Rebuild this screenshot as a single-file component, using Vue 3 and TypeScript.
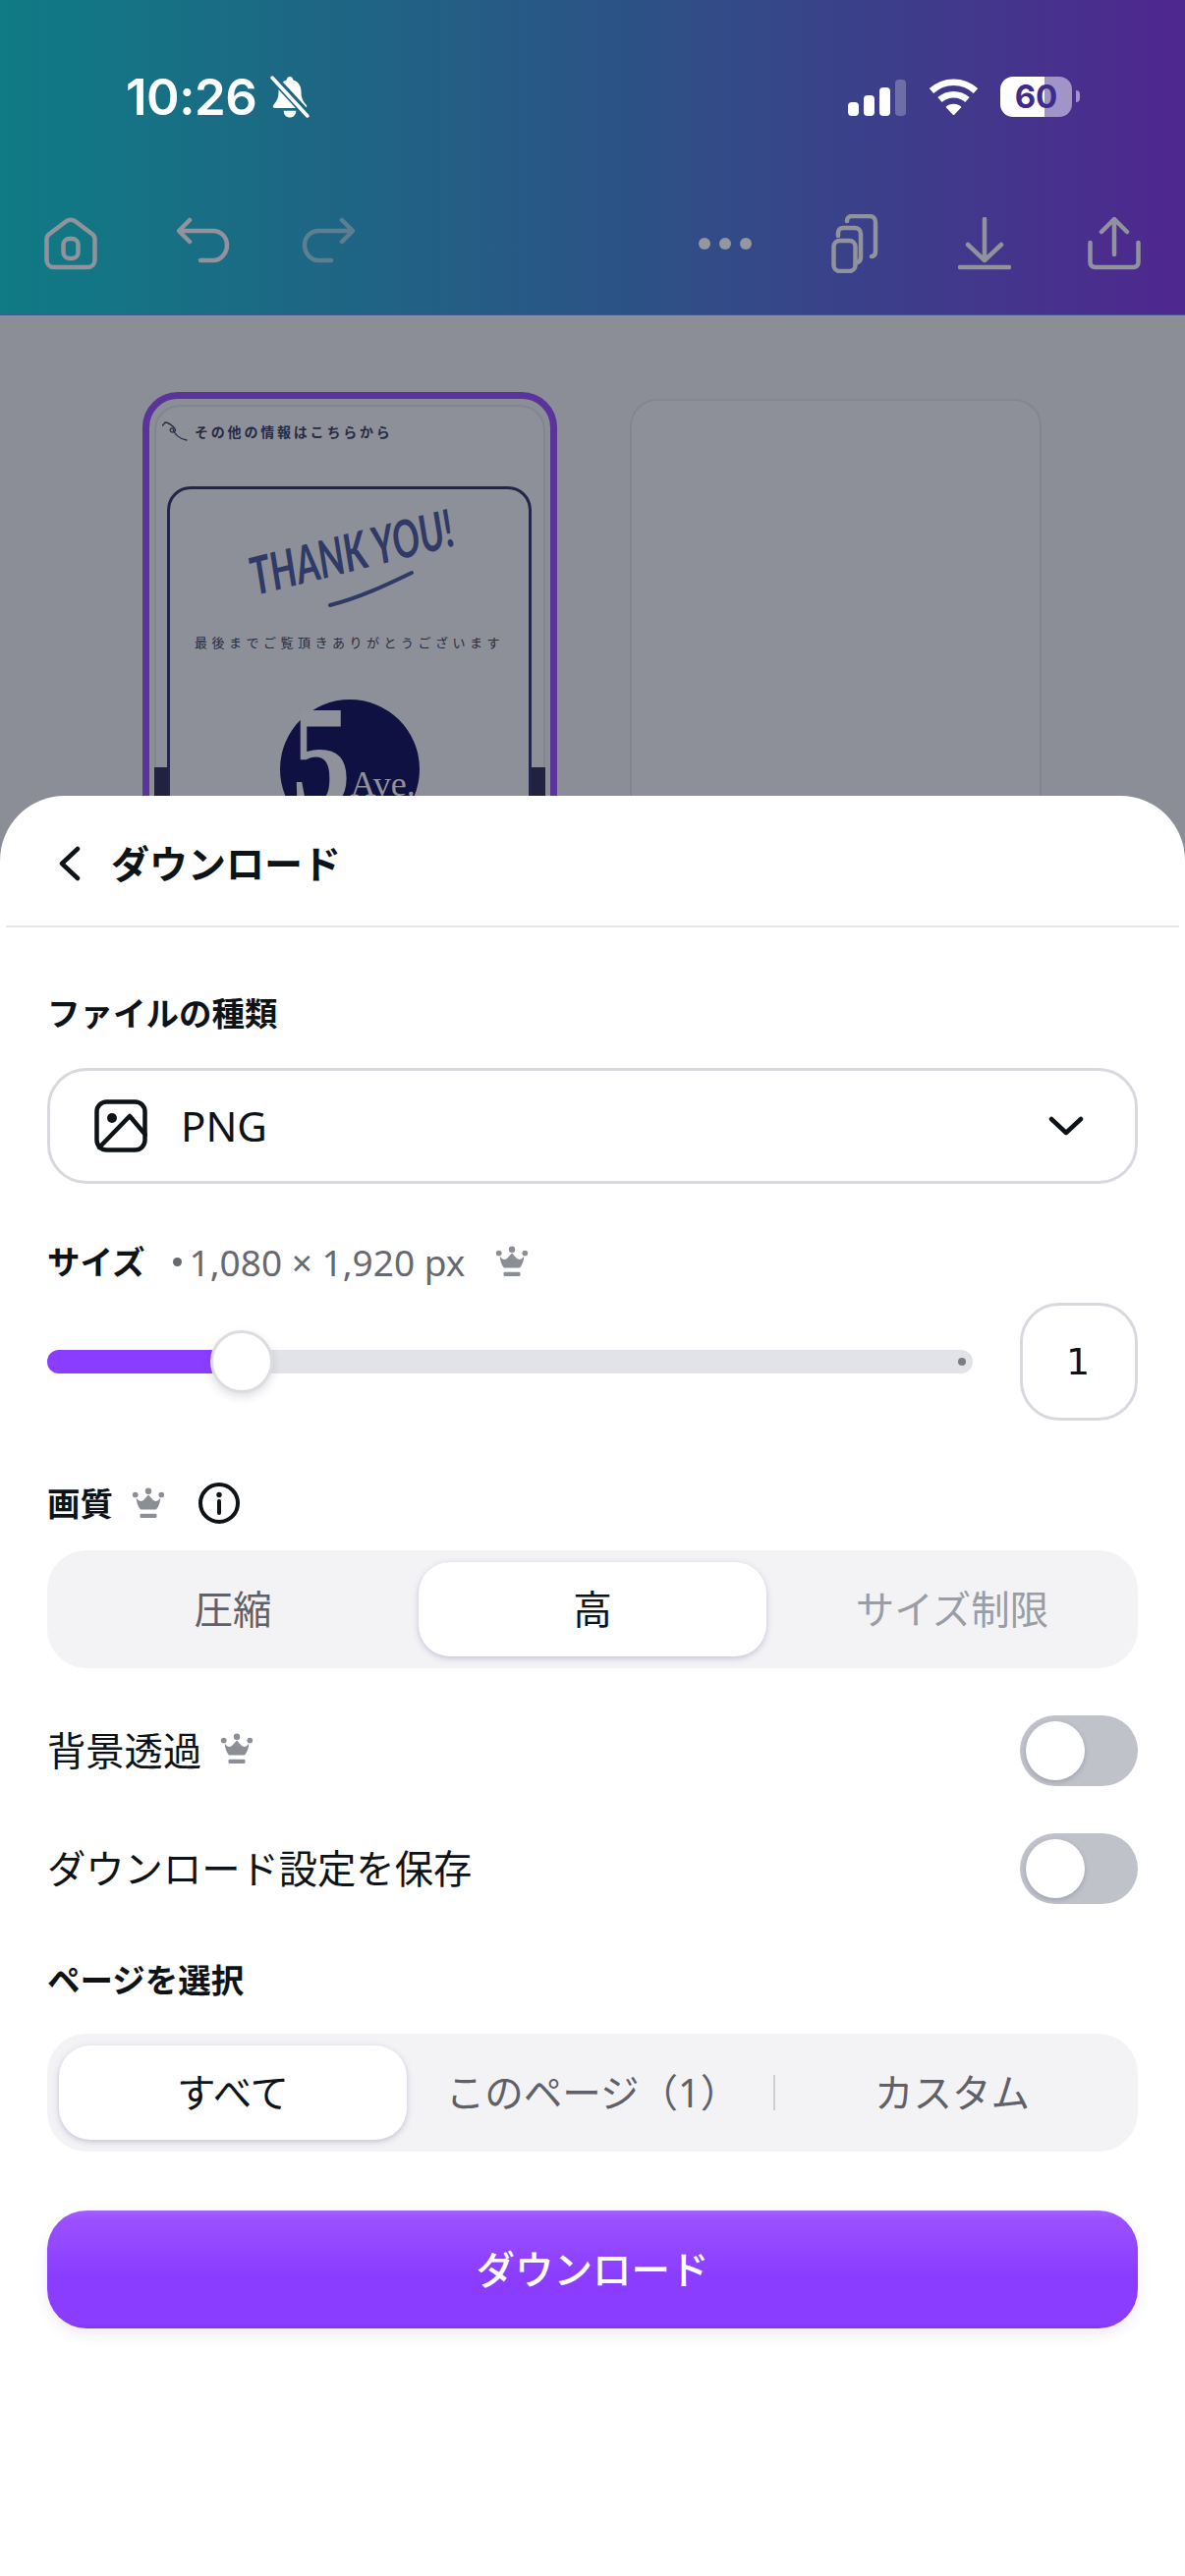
<script setup lang="ts">
interface Tab {
  label: string
  tone: 'on' | 'mid' | 'dim'
  sep?: boolean
}

// 画質
const qualityTabs: Tab[] = [
  { label: '圧縮', tone: 'mid' },
  { label: '高', tone: 'on' },
  { label: 'サイズ制限', tone: 'dim' }
]

// ページを選択
const pageTabs: Tab[] = [
  { label: 'すべて', tone: 'on' },
  { label: 'このページ（1）', tone: 'mid', sep: true },
  { label: 'カスタム', tone: 'mid' }
]

const signalBars = [14, 21, 29]
const sliderPercent = 21
</script>

<template>
  <div class="screen">
    <header class="top">
      <div class="status">
        <span class="time">10:26</span>
        <svg class="bell" width="42" height="44" viewBox="0 0 40 42">
          <path fill="#fff" d="M20 2c2 0 3 1.500 3.200 3.200C29 6.800 31 11.500 31 17c0 6 2 9 5 12.500 1 1.300.3 3-1.500 3H5.500c-1.800 0-2.500-1.700-1.500-3C7 26 9 23 9 17c0-5.500 2-10.200 7.800-11.800C17 3.500 18 2 20 2z" />
          <path fill="#fff" d="M14 35h12c0 4-2.500 6.500-6 6.500S14 39 14 35z" />
          <path stroke="#1c6585" stroke-width="8" d="M3 2l35 38" />
          <path stroke="#fff" stroke-width="3.500" stroke-linecap="round" d="M3 3l34 37" />
        </svg>
        <div class="status-right">
          <div class="signal">
            <i v-for="h in signalBars" :key="h" :style="{ height: h + 'px' }"></i>
            <i class="off"></i>
          </div>
          <svg class="wifi" width="51" height="38" viewBox="0 0 51 38" fill="none" stroke="#fff" stroke-width="6.500">
            <path d="M3 13.500A33 33 0 0 1 48 13.500" />
            <path d="M11.500 22.500A21 21 0 0 1 39.500 22.500" />
            <path fill="#fff" stroke="none" d="M17.500 30A11.500 11.500 0 0 1 33.500 30L25.500 38.500Z" />
          </svg>
          <div class="battery"><span>60</span></div>
          <i class="nub"></i>
        </div>
      </div>
      <nav class="toolbar">
        <svg width="54" height="54" viewBox="0 0 54 54" fill="none" stroke="#90939c" stroke-width="4.500" stroke-linecap="round" stroke-linejoin="round">
          <path d="M2.500 22.500c0-2 .8-3.700 2.300-5L22 4.500c3-2.300 7-2.300 10 0l17.200 13c1.500 1.300 2.300 3 2.300 5v21c0 4.500-3 7.500-7.500 7.500H10c-4.500 0-7.500-3-7.500-7.500z" />
          <rect x="19.500" y="22" width="15" height="20" rx="6" />
        </svg>
        <svg class="undo" width="54" height="54" viewBox="0 0 54 54" fill="none" stroke="#90939c" stroke-width="4.500" stroke-linecap="round" stroke-linejoin="round">
          <path d="M13 3 2 14l11 11M3 14h34c8 0 14 6.500 14 14.500S45 44 37 44H24" />
        </svg>
        <svg class="redo" width="54" height="54" viewBox="0 0 54 54" fill="none" stroke="#90939c" stroke-width="4.500" stroke-linecap="round" stroke-linejoin="round">
          <path d="M41 3l11 11-11 11M51 14H17C9 14 3 20.500 3 28.500S9 44 17 44h13" />
        </svg>
        <svg class="dots" width="54" height="54" viewBox="0 0 54 54" fill="#9496a0">
          <circle cx="6" cy="27" r="6" />
          <circle cx="27" cy="27" r="6" />
          <circle cx="48" cy="27" r="6" />
        </svg>
        <svg width="54" height="60" viewBox="0 0 54 60" fill="none" stroke="#90939c" stroke-width="4.500" stroke-linecap="round" stroke-linejoin="round">
          <rect x="5.500" y="27" width="22" height="31" rx="6" />
          <path d="M10 22v-3c0-3 2-5 5-5h12c3 0 6 2 6 6v24c0 2-1 4-3 5" />
          <path d="M19 7c0-3 2-5 5-5h18c3 0 6 2 6 6v30c0 3-1 5-4 5" />
        </svg>
        <svg width="54" height="54" viewBox="0 0 54 54" fill="none" stroke="#90939c" stroke-width="4.500" stroke-linecap="round" stroke-linejoin="round">
          <path d="M27 2v42M10 28l17 16 17-16M2 51h50" />
        </svg>
        <svg width="54" height="54" viewBox="0 0 54 54" fill="none" stroke="#90939c" stroke-width="4.500" stroke-linecap="round" stroke-linejoin="round">
          <path d="M27 38V2M14 15 27 2l13 13M2.500 26v20c0 3 2 5 5 5h39c3 0 5-2 5-5V26" />
        </svg>
      </nav>
    </header>

    <section class="canvas">
      <div class="page selected">
        <div class="design">
          <div class="more">
            <svg width="26" height="20" viewBox="0 0 26 20" fill="none" stroke="#2a2c45" stroke-width="1.300" stroke-linecap="round" stroke-linejoin="round">
              <path d="M0.500 4 3 1C6 1 9 3 12 6c3 3 1 5-2 5C7 10 8 6 11 7c1 6 7 11 14 12" />
            </svg>
            <span>その他の情報はこちらから</span>
          </div>
          <div class="frame">
            <div class="thanks">
              <span>THANK YOU!</span>
              <svg width="100" height="44" viewBox="0 0 100 44" fill="none" stroke="#2f3a66" stroke-width="4" stroke-linecap="round">
                <path d="M3 41C35 33 65 18 86 8" />
              </svg>
            </div>
            <p class="caption">最後までご覧頂きありがとうございます</p>
            <div class="logo">
              <span class="five">5</span>
              <span class="ave">Ave.</span>
            </div>
          </div>
          <i class="band left"></i>
          <i class="band right"></i>
        </div>
      </div>
      <div class="page blank"></div>
    </section>

    <section class="sheet">
      <div class="sheet-head">
        <svg class="back" width="24" height="36" viewBox="0 0 24 36" fill="none" stroke="#0e1318" stroke-width="4.500" stroke-linecap="round" stroke-linejoin="round">
          <path d="M20 3 4 18l16 15" />
        </svg>
        <h1>ダウンロード</h1>
      </div>

      <div class="body">
        <h2 class="label first">ファイルの種類</h2>
        <div class="select">
          <svg width="54" height="54" viewBox="0 0 54 54" fill="none" stroke="#0e1318" stroke-width="4.500" stroke-linecap="round" stroke-linejoin="round">
            <rect x="2.500" y="2.500" width="49" height="49" rx="10" />
            <circle cx="18" cy="19" r="5" fill="#0e1318" stroke="none" />
            <path d="M5 49 36 17l16 19" />
          </svg>
          <span class="png">PNG</span>
          <svg class="chev" width="36" height="20" viewBox="0 0 36 20" fill="none" stroke="#0e1318" stroke-width="4.500" stroke-linecap="round" stroke-linejoin="round">
            <path d="M3 3l15 14L33 3" />
          </svg>
        </div>

        <div class="size-row">
          <h2 class="label">サイズ</h2>
          <span class="dims"><i></i>1,080 × 1,920 px</span>
          <svg class="crown" width="34" height="32" viewBox="0 0 32 30" fill="#8c8e96">
            <circle cx="3.500" cy="7" r="2.700" /><circle cx="16" cy="3.500" r="3" /><circle cx="28.500" cy="7" r="2.700" />
            <path d="M4.500 10c0 5 3 11 4.500 11h14c1.500 0 4.500-6 4.500-11-2 3-5 4-7 2L16 7l-4.500 5c-2 2-5 1-7-2z" />
            <rect x="8" y="25" width="16" height="4" rx="1" />
          </svg>
        </div>

        <div class="slider-row">
          <div class="track">
            <div class="fill" :style="{ width: sliderPercent + '%' }"></div>
            <i class="end"></i>
            <i class="thumb"></i>
          </div>
          <div class="num">1</div>
        </div>

        <div class="quality-row">
          <h2 class="label">画質</h2>
          <svg class="crown" width="34" height="32" viewBox="0 0 32 30" fill="#8c8e96">
            <circle cx="3.500" cy="7" r="2.700" /><circle cx="16" cy="3.500" r="3" /><circle cx="28.500" cy="7" r="2.700" />
            <path d="M4.500 10c0 5 3 11 4.500 11h14c1.500 0 4.500-6 4.500-11-2 3-5 4-7 2L16 7l-4.500 5c-2 2-5 1-7-2z" />
            <rect x="8" y="25" width="16" height="4" rx="1" />
          </svg>
          <svg class="info" width="42" height="42" viewBox="0 0 42 42" fill="none" stroke="#0e1318" stroke-width="4">
            <circle cx="21" cy="21" r="19" />
            <circle cx="21" cy="12.500" r="2.700" fill="#0e1318" stroke="none" />
            <path d="M21 19v12" stroke-linecap="round" />
          </svg>
        </div>
        <div class="seg quality">
          <div v-for="t in qualityTabs" :key="t.label" class="tab" :class="t.tone">{{ t.label }}</div>
        </div>

        <div class="switch-row first-switch">
          <div class="switch-label">
            <span>背景透過</span>
            <svg class="crown" width="34" height="32" viewBox="0 0 32 30" fill="#8c8e96">
              <circle cx="3.500" cy="7" r="2.700" /><circle cx="16" cy="3.500" r="3" /><circle cx="28.500" cy="7" r="2.700" />
              <path d="M4.500 10c0 5 3 11 4.500 11h14c1.500 0 4.500-6 4.500-11-2 3-5 4-7 2L16 7l-4.500 5c-2 2-5 1-7-2z" />
              <rect x="8" y="25" width="16" height="4" rx="1" />
            </svg>
          </div>
          <div class="toggle"><i></i></div>
        </div>
        <div class="switch-row">
          <div class="switch-label"><span>ダウンロード設定を保存</span></div>
          <div class="toggle"><i></i></div>
        </div>

        <h2 class="label pages">ページを選択</h2>
        <div class="seg">
          <div v-for="t in pageTabs" :key="t.label" class="tab" :class="[t.tone, { sep: t.sep }]">{{ t.label }}</div>
        </div>

        <button class="download">ダウンロード</button>
      </div>
    </section>
  </div>
</template>

<style scoped>
.screen {
  width: 1206px;
  height: 2622px;
  overflow: hidden;
  background: #fff;
  font-family: "Noto Sans", "Noto Sans CJK JP", sans-serif;
  color: #0e1318;
}

/* ヘッダー */
.top {
  height: 321px;
  box-sizing: border-box;
  padding-top: 76px;
  background: linear-gradient(90deg, #0f7b84 0%, #2a5585 50%, #4f278f 100%);
  border-bottom: 1px solid #46558d;
}
.status {
  display: flex;
  align-items: center;
  height: 44px;
  padding-left: 128px;
  color: #fff;
}
.time {
  font-family: Inter, sans-serif;
  font-size: 51px;
  font-weight: 600;
  letter-spacing: -0.5px;
}
.bell {
  margin-left: 13px;
}
.status-right {
  margin-left: auto;
  margin-right: 107px;
  display: flex;
  align-items: center;
}
.signal {
  display: flex;
  align-items: flex-end;
  gap: 5px;
  height: 37px;
  margin-top: 2px;
}
.signal i {
  width: 11px;
  background: #fff;
  border-radius: 4px;
}
.signal i.off {
  height: 37px;
  background: rgba(255, 255, 255, 0.25);
}
.wifi {
  margin-left: 23px;
}
.battery {
  width: 73px;
  height: 41px;
  margin-left: 22px;
  border-radius: 13px;
  background: linear-gradient(90deg, #fff 0 62%, #a094c8 62% 100%);
  display: flex;
  align-items: center;
  justify-content: center;
  font-family: Inter, sans-serif;
  font-size: 33px;
  font-weight: 700;
  color: #402b8c;
}
.nub {
  width: 4px;
  height: 12px;
  margin-left: 4px;
  background: #a094c8;
  border-radius: 0 4px 4px 0;
}
.toolbar {
  display: flex;
  align-items: center;
  height: 60px;
  margin-top: 98px;
  padding-left: 45px;
}
.undo {
  margin-left: 81px;
}
.redo {
  margin-left: 73px;
  opacity: 0.55;
}
.dots {
  margin-left: auto;
}
.toolbar svg + svg:not(.undo):not(.redo):not(.dots) {
  margin-left: 78px;
}
.toolbar svg:last-child {
  margin-right: 45px;
}

/* キャンバス */
.canvas {
  display: flex;
  align-items: flex-start;
  gap: 74px;
  height: 559px;
  box-sizing: border-box;
  padding: 78px 0 0 145px;
  background: #8b8e96;
  overflow: hidden;
}
.page {
  box-sizing: border-box;
  height: 600px;
}
.selected {
  width: 422px;
  padding: 6px 5px;
  border: 7px solid #5b349b;
  border-radius: 36px;
}
.blank {
  width: 419px;
  margin-top: 7px;
  background: #8d9098;
  border: 2px solid #83868f;
  border-radius: 28px;
}
.design {
  position: relative;
  box-sizing: border-box;
  height: 560px;
  padding: 10px 12px 0 11px;
  background: #8d9098;
  border: 2px solid #82858f;
  border-radius: 26px;
}
.more {
  display: flex;
  align-items: center;
  gap: 7px;
  height: 30px;
  margin-left: -5px;
  color: #272a44;
  font-size: 14px;
  font-weight: 700;
  letter-spacing: 2.800px;
  white-space: nowrap;
}
.frame {
  box-sizing: border-box;
  height: 500px;
  margin-top: 41px;
  border: 3px solid #23254a;
  border-radius: 24px;
}
.thanks {
  position: relative;
  height: 90px;
  margin-top: 31px;
}
.thanks span {
  position: absolute;
  left: 82px;
  top: 30px;
  font-family: Lato, sans-serif;
  font-size: 46px;
  font-weight: 700;
  font-style: italic;
  color: #2f3a66;
  white-space: nowrap;
  transform: rotate(-14deg) scale(0.8, 1.15);
  transform-origin: left center;
}
.thanks svg {
  position: absolute;
  left: 160px;
  top: 46px;
}
.caption {
  margin: 23px 0 0;
  height: 24px;
  line-height: 24px;
  text-align: center;
  font-size: 13px;
  letter-spacing: 4.500px;
  color: #2a2c45;
  white-space: nowrap;
}
.logo {
  position: relative;
  width: 142px;
  height: 142px;
  margin: 46px auto 0;
  border-radius: 50%;
  background: #0f1142;
  color: #8f929b;
  font-family: "Liberation Serif", serif;
}
.five {
  position: absolute;
  left: 12px;
  top: -16px;
  font-size: 150px;
  font-weight: 700;
  line-height: 1;
  transform: scaleX(0.8);
  transform-origin: left center;
}
.ave {
  position: absolute;
  left: 72px;
  top: 68px;
  font-size: 36px;
  line-height: 1;
}
.band {
  position: absolute;
  top: 367px;
  width: 14px;
  height: 120px;
  background: #202240;
}
.band.left {
  left: -2px;
}
.band.right {
  right: -2px;
}

/* シート */
.sheet {
  position: relative;
  height: 1812px;
  margin-top: -70px;
  background: #fff;
  border-radius: 66px 66px 0 0;
}
.sheet-head {
  display: flex;
  align-items: center;
  gap: 30px;
  height: 132px;
  padding-left: 59px;
  box-sizing: border-box;
}
.sheet-head::after {
  content: "";
  position: absolute;
  left: 6px;
  right: 6px;
  top: 132px;
  height: 2px;
  background: #e4e5e8;
}
.back {
  margin-top: 5px;
}
.sheet-head h1 {
  margin: 5px 0 0;
  font-size: 39px;
  font-weight: 700;
  line-height: 1;
}
.body {
  padding: 2px 48px 0;
}
.label {
  margin: 0;
  height: 40px;
  line-height: 40px;
  font-size: 33.500px;
  font-weight: 700;
  white-space: nowrap;
}
.label.first {
  margin-top: 67px;
}
.select {
  display: flex;
  align-items: center;
  height: 118px;
  margin-top: 36px;
  padding: 0 52px 0 45px;
  box-sizing: border-box;
  border: 3px solid #d8d9de;
  border-radius: 40px;
}
.png {
  margin-left: 34px;
  margin-bottom: 2px;
  font-size: 42px;
}
.chev {
  margin-left: auto;
}
.size-row {
  display: flex;
  align-items: center;
  height: 44px;
  margin-top: 57px;
}
.dims {
  display: flex;
  align-items: center;
  margin-left: 28px;
  font-size: 37px;
  color: #676971;
  white-space: nowrap;
}
.dims i {
  width: 9px;
  height: 9px;
  margin-right: 8px;
  border-radius: 50%;
  background: #676971;
}
.size-row .crown {
  margin-left: 31px;
}
.slider-row {
  display: flex;
  align-items: center;
  gap: 48px;
  height: 120px;
  margin-top: 20px;
}
.track {
  position: relative;
  flex: 1;
  height: 24px;
  border-radius: 12px;
  background: #e2e3e8;
}
.fill {
  height: 100%;
  border-radius: 12px 0 0 12px;
  background: #8b3dff;
}
.end {
  position: absolute;
  right: 7px;
  top: 8px;
  width: 8px;
  height: 8px;
  border-radius: 50%;
  background: #7b7d86;
}
.thumb {
  position: absolute;
  left: 166px;
  top: -20px;
  box-sizing: border-box;
  width: 64px;
  height: 64px;
  border-radius: 50%;
  background: #fff;
  border: 3px solid #dcdde2;
  box-shadow: 0 4px 10px rgba(60, 60, 90, 0.16);
}
.num {
  box-sizing: border-box;
  width: 120px;
  height: 120px;
  border: 3px solid #d8d9de;
  border-radius: 40px;
  display: flex;
  align-items: center;
  justify-content: center;
  font-family: "DejaVu Sans", sans-serif;
  font-size: 38px;
  padding-right: 2px;
}
.quality-row {
  display: flex;
  align-items: center;
  height: 44px;
  margin-top: 62px;
}
.quality-row .crown {
  margin-left: 19px;
}
.info {
  margin-left: 34px;
}
.seg {
  display: flex;
  gap: 12px;
  height: 120px;
  margin-top: 35px;
  padding: 12px;
  box-sizing: border-box;
  background: #f3f3f6;
  border-radius: 40px;
}
.seg.quality {
  margin-top: 26px;
}
.tab {
  position: relative;
  flex: 1 1 0;
  min-width: 0;
  display: flex;
  align-items: center;
  justify-content: center;
  box-sizing: border-box;
  padding-bottom: 5px;
  border-radius: 32px;
  font-size: 39.500px;
  white-space: nowrap;
}
.tab.on {
  background: #fff;
  color: #0e1318;
  box-shadow: 0 2px 6px rgba(70, 70, 130, 0.28);
}
.tab.mid {
  color: #5f6068;
}
.tab.dim {
  color: #9b9da4;
}
.tab.sep::after {
  content: "";
  position: absolute;
  right: -9px;
  top: 30px;
  width: 2px;
  height: 36px;
  background: #cdced3;
}
.switch-row {
  display: flex;
  align-items: center;
  justify-content: space-between;
  height: 72px;
  margin-top: 48px;
}
.switch-label {
  display: flex;
  align-items: center;
  gap: 19px;
  padding-bottom: 5px;
  font-size: 39.300px;
}
.toggle {
  box-sizing: border-box;
  width: 120px;
  height: 72px;
  padding: 6px;
  border-radius: 36px;
  background: #c0c2ca;
}
.toggle i {
  display: block;
  width: 60px;
  height: 60px;
  border-radius: 50%;
  background: #fff;
  box-shadow: 0 2px 5px rgba(60, 60, 90, 0.25);
}
.label.pages {
  margin-top: 57px;
}
.download {
  display: block;
  width: 100%;
  height: 120px;
  margin-top: 60px;
  padding: 0 0 5px;
  border: none;
  border-radius: 40px;
  background: linear-gradient(180deg, #a45fff 0%, #9a50ff 8%, #8b3dff 55%, #8b3dff 96%, #7f36ea 100%);
  box-shadow: 0 6px 14px rgba(90, 60, 160, 0.1);
  color: #fff;
  font-family: inherit;
  font-size: 39.500px;
  font-weight: 500;
}
</style>

<style>
html,
body {
  margin: 0;
  background: #fff;
}
</style>
